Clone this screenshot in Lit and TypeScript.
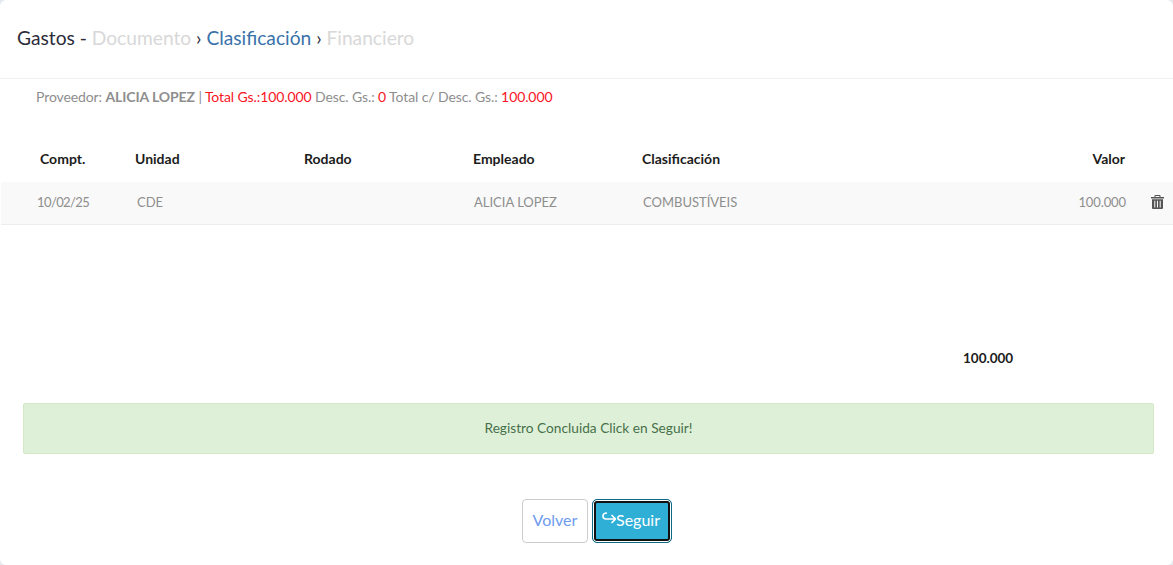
import { LitElement, html, css } from "lit";
import { customElement } from "lit/decorators.js";

@customElement("app-root")
export class AppRoot extends LitElement {
  static styles = css`
    :host { display: block; width: 1173px; height: 565px; background: #e4e9ee; font-family: "Lato", "Liberation Sans", sans-serif; overflow: hidden; }
    .modal { height: 565px; box-sizing: border-box; background: #fff; border-radius: 6px; display: flex; flex-direction: column; }
    .title { height: 79px; box-sizing: border-box; border-bottom: 1px solid #f0f0f0; padding: 27px 17px 0; font-size: 19.2px; line-height: 22px; color: #2b2b3a; white-space: nowrap; }
    .off { color: #d8d8d8; }
    .on { color: #3a72aa; }
    .info { box-sizing: border-box; padding: 9px 36px 0; font-size: 14px; letter-spacing: -0.1px; line-height: 17px; color: #8e8e8e; height: 43px; white-space: nowrap; }
    .info b { font-weight: 700; }
    .red { color: #f9141f; }
    .row { display: grid; grid-template-columns: 134px 169px 169px 169px 1fr 100px 48px; align-items: center; margin-left: 1px; }
    .head { height: 60px; box-sizing: border-box; padding-top: 12px; font-size: 14px; font-weight: 700; color: #1c1c1c; }
    .head > div:first-child { padding-left: 39px; }
    .head .val { text-align: right; }
    .data { height: 43px; box-sizing: border-box; padding-bottom: 2px; background: #f9f9f9; border-bottom: 1px solid #ededed; font-size: 13px; color: #8e8e8e; }
    .data > div:first-child { padding-left: 36px; letter-spacing: -0.6px; }
    .data > div:nth-child(2) { padding-left: 2px; }
    .data > div:nth-child(4), .data > div:nth-child(5) { padding-left: 1px; }
    .data .val { text-align: right; margin-right: -1px; letter-spacing: -0.1px; }
    .ico { display: flex; justify-content: flex-end; padding-right: 9px; }
    .ico svg { width: 13px; height: 14px; display: block; }
    .total { height: 178px; box-sizing: border-box; padding: 125px 0 0 963px; font-size: 13.5px; line-height: 17px; font-weight: 700; color: #1c1c1c; }
    .alert { margin: 0 19px 0 23px; height: 51px; box-sizing: border-box; padding-bottom: 2px; background: #dff0d8; border: 1px solid #d6e9c6; border-radius: 2px; color: #46704a; font-size: 13.7px; display: flex; align-items: center; justify-content: center; }
    .actions { display: flex; justify-content: center; gap: 4px; margin-top: 45px; padding-left: 21px; }
    button { font-family: inherit; font-size: 16px; height: 44px; box-sizing: border-box; border-radius: 4px; padding: 0 0 3px; cursor: pointer; }
    .back { width: 66px; background: #fff; border: 1px solid #ccc; color: #6e9bee; }
    .next { width: 80px; padding-right: 2px; background: #2fafd6; color: #fff; border: 1px solid #0d6a86; box-shadow: inset 0 0 0 1px #fff, inset 0 0 0 3px #111; border-radius: 5px; display: flex; align-items: center; justify-content: center; }
    .next svg { width: 14px; height: 12px; margin-bottom: 3px; }
  `;

  render() {
    return html`<div class="modal">
      <div class="title">Gastos - <span class="off">Documento</span> › <span class="on">Clasificación</span> › <span class="off">Financiero</span></div>
      <div class="info">Proveedor: <b>ALICIA LOPEZ</b> | <span class="red">Total Gs.:100.000</span> Desc. Gs.: <span class="red">0</span> Total c/ Desc. Gs.: <span class="red">100.000</span></div>
      <div class="row head">
        <div>Compt.</div><div>Unidad</div><div>Rodado</div><div>Empleado</div><div>Clasificación</div><div class="val">Valor</div><div></div>
      </div>
      <div class="row data">
        <div>10/02/25</div><div>CDE</div><div></div><div>ALICIA LOPEZ</div><div>COMBUSTÍVEIS</div><div class="val">100.000</div>
        <div class="ico"><svg viewBox="0 0 13 14" fill="#555"><path fill-rule="evenodd" d="M3.500 2V.8C3.500.4 3.900 0 4.300 0h4.400c.4 0 .8.4.8.8V2H13v1.500H0V2zm1-1v1h4V1zM1 4.300h11V13a1 1 0 0 1-1 1H2a1 1 0 0 1-1-1zm2.300 1.400v6.800h1V5.700zm2.700 0v6.800h1V5.700zm2.700 0v6.800h1V5.700z"/></svg></div>
      </div>
      <div class="total">100.000</div>
      <div class="alert">Registro Concluida Click en Seguir!</div>
      <div class="actions">
        <button class="back">Volver</button>
        <button class="next"><svg viewBox="0 0 14 12" fill="none" stroke="#fff" stroke-width="1.600"><path d="M5 1C2 1 1 2.500 1 4c0 2 1.500 3 3 3h9M9.500 3l4 4-4 4"/></svg>Seguir</button>
      </div>
    </div>`;
  }
}
